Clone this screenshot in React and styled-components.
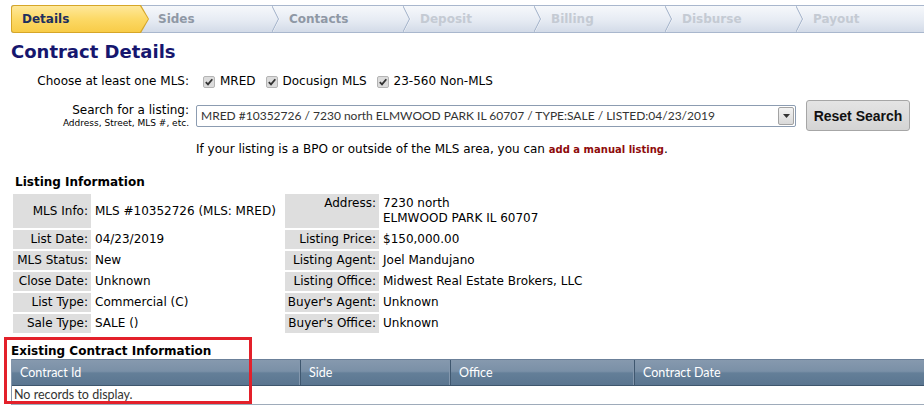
import React from "react";
import styled, { createGlobalStyle } from "styled-components";

const GlobalStyle = createGlobalStyle`
  body {
    margin: 0;
    background: #fff;
    font-family: "DejaVu Sans", Verdana, sans-serif;
    font-size: 12px;
    color: #000;
  }
`;

const Page = styled.div`
  position: relative;
  padding: 5px 0 0 11px;
  overflow: hidden;
`;

/* ---- wizard steps ---- */

const TabBar = styled.div`
  display: flex;
  height: 26px;
  border: 1px solid #a9b7cd;
  border-right: none;
  border-radius: 3px 0 0 3px;
  background: linear-gradient(#f6f8fb, #e6ebf3 55%, #d3dbe8);
`;

const ActiveTab = styled.div`
  flex: 0 0 138px;
  height: 28px;
  margin: -1px 0 -1px -1px;
  background: #d6a628;
  border-radius: 3px 0 0 3px;
  clip-path: polygon(0 0, calc(100% - 8px) 0, 100% 50%, calc(100% - 8px) 100%, 0 100%);
  display: flex;
`;

const ActiveInner = styled.div`
  flex: 1;
  margin: 1px;
  border-radius: 2px 0 0 2px;
  background: linear-gradient(#fee89a, #fcd966 50%, #f8cc48);
  clip-path: polygon(0 0, calc(100% - 8px) 0, 100% 50%, calc(100% - 8px) 100%, 0 100%);
  display: flex;
  align-items: center;
  padding-left: 10px;
  font-weight: bold;
  color: #1e2f5e;
`;

const Tab = styled.div`
  flex: 0 0 131px;
  display: flex;
  align-items: center;
  padding-left: 9px;
  font-weight: bold;
  color: ${(p) => (p.$done ? "#8f98a5" : "#c4cad3")};
  box-sizing: border-box;

  svg {
    margin-left: auto;
  }
`;

const Chevron = () => (
  <svg width="8" height="26" viewBox="0 0 8 26">
    <polyline points="0.5,0 7,13 0.5,26" fill="none" stroke="#fff" strokeWidth="1" />
    <polyline points="0,0 6.5,13 0,26" fill="none" stroke="#9cadc6" strokeWidth="1" />
  </svg>
);

/* ---- form ---- */

const Title = styled.h1`
  margin: 8px 0 0;
  font-size: 18px;
  line-height: 22px;
  color: #16166e;
`;

const FormRow = styled.div`
  display: grid;
  grid-template-columns: 178px auto;
  column-gap: 7px;
  align-items: center;
  margin-top: ${(p) => p.$top || 0}px;
`;

const Label = styled.div`
  text-align: right;
  line-height: 15px;
`;

const Hint = styled.div`
  font-size: 9px;
  line-height: 11px;
`;

const Checks = styled.div`
  display: flex;
  align-items: center;
  padding-left: 7px;
`;

const CheckItem = styled.label`
  display: flex;
  align-items: center;
  gap: 5px;
  margin-right: 10px;
  line-height: 15px;
`;

const Box = () => (
  <svg width="12" height="12" viewBox="0 0 12 12">
    <rect x="0.5" y="0.5" width="11" height="11" rx="1.5" fill="#dcdcdc" stroke="#b4b4b4" />
    <path d="M2.8 6.2 L5 8.4 L9.3 3.2" fill="none" stroke="#333" strokeWidth="1.8" />
  </svg>
);

const SearchControls = styled.div`
  display: flex;
  align-items: center;
  gap: 10px;
`;

const Select = styled.div`
  width: 600px;
  height: 22px;
  box-sizing: border-box;
  border: 1px solid #8c9cb1;
  border-radius: 2px;
  display: flex;
  align-items: center;
  font-family: Lato, "Open Sans", sans-serif;
  font-size: 12px;
  color: #333;
  padding-left: 4px;
`;

const SelectText = styled.span`
  flex: 1;
  white-space: nowrap;
`;

const SelectArrow = styled.span`
  width: 16px;
  height: 18px;
  margin-right: 1px;
  border: 1px solid #a3a3a3;
  border-radius: 2px;
  box-sizing: border-box;
  background: linear-gradient(#f3f3f3, #d9d9d9);
  display: flex;
  align-items: center;
  justify-content: center;
`;

const ResetButton = styled.button`
  width: 104px;
  height: 31px;
  border: 1px solid #a6a6a6;
  border-radius: 3px;
  background: linear-gradient(#e4e4e4, #d4d4d4);
  font-family: "Liberation Sans", Arial, sans-serif;
  font-weight: bold;
  font-size: 14px;
  color: #111;
  padding: 0;
`;

const Note = styled.div`
  line-height: 15px;
`;

const ManualLink = styled.a`
  font-weight: bold;
  font-size: 10px;
  color: #8e0b0b;
  text-decoration: none;
`;

/* ---- listing information ---- */

const SectionTitle = styled.div`
  font-weight: bold;
  line-height: 15px;
  margin-top: ${(p) => p.$top}px;
  padding-left: ${(p) => p.$indent || 0}px;
`;

const InfoGrid = styled.div`
  display: grid;
  grid-template-columns: 78px 190px 94px 1fr;
  gap: 2px;
  margin: 4px 0 0 2px;
`;

const Key = styled.div`
  background: #dedede;
  padding: 2px 3px 2px 0;
  line-height: 15px;
  white-space: nowrap;
  align-self: stretch;
  display: flex;
  justify-content: flex-end;
  align-items: ${(p) => (p.$top ? "flex-start" : "center")};
`;

const Value = styled.div`
  padding: 2px 0 2px 2px;
  line-height: 15px;
  white-space: ${(p) => (p.$lines ? "pre" : "nowrap")};
  align-self: center;
`;

/* ---- existing contract grid ---- */

const DataGrid = styled.div`
  width: 1000px;
  border-left: 1px solid #8496ab;
  border-bottom: 1px solid #9eabba;
  font-family: Lato, "Open Sans", sans-serif;
`;

const HeadRow = styled.div`
  display: grid;
  grid-template-columns: 289px 150px 184px 1fr;
  height: 27px;
  background: linear-gradient(#8699ae, #7a90a7 45%, #647f98 52%, #5a7590);
  border-top: 1px solid #6b8099;
  border-bottom: 1px solid #3e566d;
  box-sizing: border-box;
`;

const HeadCell = styled.div`
  display: flex;
  align-items: center;
  padding-left: 8px;
  color: #fff;
  font-size: 12.5px;
  border-right: 1px solid #3f576f;
  box-shadow: inset -1px 0 0 #8397ad;
`;

const EmptyRow = styled.div`
  height: 18px;
  line-height: 18px;
  padding-left: 2px;
  font-size: 12.5px;
  color: #333;
`;

const Highlight = styled.div`
  position: absolute;
  left: 4px;
  top: 337px;
  width: 248px;
  height: 67px;
  box-sizing: border-box;
  border: 3px solid #e3202a;
  pointer-events: none;
`;

const steps = [
  { name: "Sides", done: true },
  { name: "Contacts", done: true },
  { name: "Deposit", done: false },
  { name: "Billing", done: false },
  { name: "Disburse", done: false },
  { name: "Payout", done: false },
];

const mlsList = ["MRED", "Docusign MLS", "23-560 Non-MLS"];

const leftInfo = [
  ["MLS Info:", "MLS #10352726 (MLS: MRED)"],
  ["List Date:", "04/23/2019"],
  ["MLS Status:", "New"],
  ["Close Date:", "Unknown"],
  ["List Type:", "Commercial (C)"],
  ["Sale Type:", "SALE ()"],
];

const rightInfo = [
  ["Address:", "7230 north\nELMWOOD PARK IL 60707"],
  ["Listing Price:", "$150,000.00"],
  ["Listing Agent:", "Joel Mandujano"],
  ["Listing Office:", "Midwest Real Estate Brokers, LLC"],
  ["Buyer's Agent:", "Unknown"],
  ["Buyer's Office:", "Unknown"],
];

const columns = ["Contract Id", "Side", "Office", "Contract Date"];

export default function App() {
  return (
    <Page>
      <GlobalStyle />
      <TabBar>
        <ActiveTab>
          <ActiveInner>Details</ActiveInner>
        </ActiveTab>
        {steps.map((s) => (
          <Tab key={s.name} $done={s.done}>
            {s.name}
            <Chevron />
          </Tab>
        ))}
      </TabBar>

      <Title>Contract Details</Title>

      <FormRow $top={11}>
        <Label>Choose at least one MLS:</Label>
        <Checks>
          {mlsList.map((m) => (
            <CheckItem key={m}>
              <Box />
              {m}
            </CheckItem>
          ))}
        </Checks>
      </FormRow>

      <FormRow $top={11}>
        <Label>
          Search for a listing:
          <Hint>Address, Street, MLS #, etc.</Hint>
        </Label>
        <SearchControls>
          <Select>
            <SelectText>
              MRED #10352726 / 7230 north ELMWOOD PARK IL 60707 / TYPE:SALE / LISTED:04/23/2019
            </SelectText>
            <SelectArrow>
              <svg width="7" height="4" viewBox="0 0 7 4">
                <path d="M0 0 H7 L3.5 4 Z" fill="#333" />
              </svg>
            </SelectArrow>
          </Select>
          <ResetButton>Reset Search</ResetButton>
        </SearchControls>
      </FormRow>

      <FormRow $top={11}>
        <span />
        <Note>
          If your listing is a BPO or outside of the MLS area, you can{" "}
          <ManualLink href="#">add a manual listing</ManualLink>.
        </Note>
      </FormRow>

      <SectionTitle $top={18} $indent={4}>Listing Information</SectionTitle>
      <InfoGrid>
        {leftInfo.map(([lk, lv], i) => (
          <React.Fragment key={lk}>
            <Key>{lk}</Key>
            <Value>{lv}</Value>
            <Key $top={i === 0}>{rightInfo[i][0]}</Key>
            <Value $lines={i === 0}>{rightInfo[i][1]}</Value>
          </React.Fragment>
        ))}
      </InfoGrid>

      <SectionTitle $top={11}>Existing Contract Information</SectionTitle>
      <DataGrid>
        <HeadRow>
          {columns.map((c) => (
            <HeadCell key={c}>{c}</HeadCell>
          ))}
        </HeadRow>
        <EmptyRow>No records to display.</EmptyRow>
      </DataGrid>

      <Highlight />
    </Page>
  );
}
